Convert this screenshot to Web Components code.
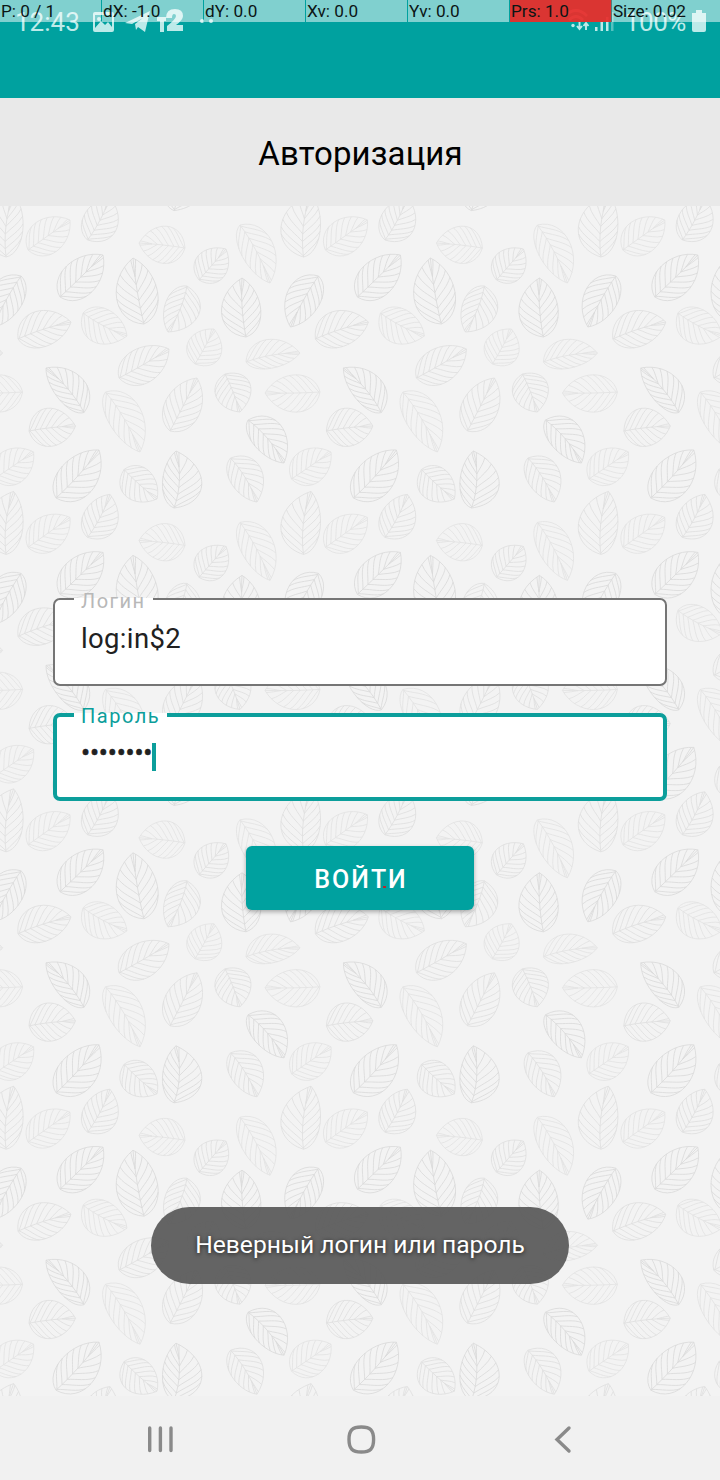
<!DOCTYPE html>
<html lang="ru">
<head>
<meta charset="utf-8">
<title>Авторизация</title>
<style>
html,body{margin:0;padding:0}
body{font-family:Roboto,"Noto Sans",sans-serif;background:#f3f3f3}
</style>
</head>
<body>
<login-screen></login-screen>
<script>
const define=(name,html,setup)=>customElements.define(name,class extends HTMLElement{
  connectedCallback(){
    if(this.shadowRoot)return;
    const t=document.createElement('template');
    t.innerHTML=html;
    this.attachShadow({mode:'open'}).append(t.content.cloneNode(true));
    if(setup)setup(this,this.shadowRoot);
  }
});

/* Leaf: stem x,y, tip x,y, bulge on each side of the midrib, tone */
const TILE=297.4;
const LEAVES=[
[28,250,70,220,17,17,1],[87.5,240,110,197,14,20,2],[60,297,103,255,17,18,3],[144,324,133,258,22,18,3],
[185,248,139,243,17,19,1],[199,280,226,249,16,16,2],[240,225,270,283,20,12,1],[303.5,257,311,194,25,13,2],
[246,337,242,278,22,16,3],[318.5,276,290.5,327,14,19,3],[187,286,168,332,21,13,2],[18,339,71,322,20,15,2],
[83,313,127,336,14,20,1],[195,364,214,329,16,18,1],[246,362,300,353,18,10,1],[119,378,169,349,16,18,2],
[84,412.5,46,368,10,20,3],[105.5,392,140,452,21,12,1],[170,431,197,378,17,18,2],[225,374,240,412,19,16,2],
[320,392,265,393,19,17,1],[29,431,75.5,426,20,17,2],[248,420,284,463,21,11,3],[56,498,99,450,16,21,3],
[124,469.5,157,499,15,18,2],[174,508,176,451,12,26,3],[230.5,458,257,502,20,12,2],[291.5,479,331,452,17,17,1]];
function leafPath([sx,sy,tx,ty,wl,wr]){
  const dx=tx-sx,dy=ty-sy,len=Math.hypot(dx,dy),nx=dy/len,ny=-dx/len;
  const at=(a,o)=>[sx+dx*a+nx*o,sy+dy*a+ny*o];
  const f=p=>p[0].toFixed(1)+' '+p[1].toFixed(1);
  const bez=(p,t)=>{const u=1-t;return [0,1].map(i=>u*u*u*p[0][i]+3*u*u*t*p[1][i]+3*u*t*t*p[2][i]+t*t*t*p[3][i])};
  const side=w=>[at(0,0),at(.1,w*1.4),at(.74,w*1.36),at(1,0)];
  const m=(wl-wr)*.42,rib=[at(0,0),at(.3,m),at(.7,m),at(1,0)];
  let d=`M${f(rib[0])}C${f(rib[1])} ${f(rib[2])} ${f(rib[3])}`;
  for(const w of [wl,-wr]){
    const s=side(w);
    d+=`M${f(s[0])}C${f(s[1])} ${f(s[2])} ${f(s[3])}`;
    for(let k=0;k<7;k++){
      const a=.02+k*.115,b=.4+.57*(k/6);
      const p=bez(rib,a),q=bez(s,b);
      const ex=q[0]-p[0],ey=q[1]-p[1];
      const along=(ex*dx+ey*dy)/len,out=ex*nx+ey*ny;
      const pt=(u,v)=>[p[0]+dx/len*along*u+nx*out*v,p[1]+dy/len*along*u+ny*out*v];
      d+=`M${f(p)}C${f(pt(.32,.32))} ${f(pt(.6,.8))} ${f(q)}`;
    }
  }
  return d;
}
define('leaf-backdrop',`<style>:host{display:block;overflow:hidden}svg{display:block;width:100%;height:100%}</style><svg></svg>`,(el,root)=>{
  const tone=['','#e3e3e3','#dfdfdf','#dadada'];
  let g='<defs><g id="tile" fill="none" stroke-width=".85">';
  for(const l of LEAVES)g+=`<path d="${leafPath(l)}" stroke="${tone[l[6]]}"/>`;
  g+='</g></defs>';
  for(let y=-1;y<5;y++)for(let x=-1;x<3;x++)g+=`<use href="#tile" x="${x*TILE}" y="${y*TILE-206}"/>`;
  root.querySelector('svg').innerHTML=g;
});

define('pointer-readout',`<style>
:host{display:grid;grid-template-columns:101px 101px 101px 101px 101px 101px 1fr;column-gap:1px;height:22px;color:#0b1515;font-size:17.2px;line-height:22px}
span{background:rgba(255,255,255,.5);padding-left:1px;white-space:pre;overflow:hidden}
.hot{background:rgba(232,46,44,.94);box-shadow:1px 0 #4f7f7e}
.hot+span{letter-spacing:-.1px}
</style><span>P: 0 / 1</span><span>dX: -1.0</span><span>dY: 0.0</span><span>Xv: 0.0</span><span>Yv: 0.0</span><span class="hot">Prs: 1.0</span><span>Size: 0.02</span>`);

define('status-bar',`<style>
:host{display:block;position:relative;height:98px;background:#00a19f;color:#bdeae9}
.row{display:flex;height:44px;padding:0 13px 0 15px;justify-content:space-between;font-size:26px;line-height:44px}
.side{display:flex}
svg{display:block;height:44px}
.pct{letter-spacing:-.4px;margin-left:3px}
pointer-readout{position:absolute;left:0;top:0;right:0}
</style>
<div class="row"><div class="side"><span class="clock">12:43</span>
<svg width="140" viewBox="80 0 140 44" fill="#bdeae9"><path fill-rule="evenodd" d="M95 12h17q2 0 2 2v16q0 2-2 2H95q-2 0-2-2V14q0-2 2-2zm0 3v13l6-7 4 4 3-3 4 5V15zm4 2a2 2 0 1 1 0 4 2 2 0 0 1 0-4z"/><path d="M125 23 150 11l-5 21-7-5-2 3-1-6 8-6-11 6z"/><path d="M157 17h9v4h-2v11h-4V21h-3zM166 18q0-9 9-9 8 0 8 7 0 4-7 9h7v6h-16v-5q9-7 9-10 0-2-2-2t-2 4z"/><circle cx="202" cy="21" r="2"/><circle cx="211" cy="21" r="2"/></svg></div>
<div class="side"><svg width="58" viewBox="565 0 58 44"><g fill="none" stroke="#bdeae9" stroke-width="2.6"><path d="M566 16q11-11 22 0M570 20q7-7 14 0"/></g><circle cx="574" cy="25.500" r="1.700" fill="#bdeae9"/><path d="M578 26l2.500 3 2.500-3M580.500 22v7M584.500 26l2.500-3 2.500 3M587 23v7" fill="none" stroke="#bdeae9" stroke-width="1.900"/><g fill="#bdeae9"><path d="M596 27h2.500v4H596zM601.500 22h2.500v9h-2.500zM607 17h2.500v14H607z"/><path opacity=".45" d="M612 12h2.500v19H612z"/></g></svg><span class="pct">100%</span><svg width="21" viewBox="686 0 21 44" fill="#bdeae9"><path d="M696 10h6v3h4v17q0 2-2 2h-10q-2 0-2-2V13h4z"/></svg></div></div>
<pointer-readout></pointer-readout>`);

define('title-bar',`<style>:host{display:flex;height:108px;align-items:center;justify-content:center;background:#e9e9e9;color:#000;font-size:33px;letter-spacing:.1px;padding:3px 0 0 1px;box-sizing:border-box}</style><slot></slot>`);

define('text-field',`<style>
:host{display:block;--c:#757575;--b:2px}
:host([focused]){--c:#0c9e9b;--b:4px}
fieldset{box-sizing:border-box;height:88px;margin:0;padding:0;border:0;position:relative}
.box{height:88px;box-sizing:border-box;border:var(--b) solid var(--c);border-radius:7px;background:#fff;padding:0 calc(28px - var(--b));display:flex}
.label{position:absolute;left:21px;top:-8px;padding:0 7px;height:22px;font-size:20px;line-height:22px;letter-spacing:1.5px;color:#b8b8b8;background:linear-gradient(#f3f3f300 8px,#fff 8px)}
:host([focused]) .label{color:#0c9e9b}
.value{font-size:27.5px;line-height:32px;letter-spacing:.35px;color:#212121;margin-top:calc(25px - var(--b));white-space:pre}
.caret{display:none;width:4px;height:28px;background:#0c9e9b;margin-top:26px}
:host([focused]) .caret{display:block}
:host([focused]) .value{font-size:27px;margin-top:20px;letter-spacing:-.2px;-webkit-text-stroke:.5px #212121}
</style><fieldset><div class="box"><span class="value"><slot></slot></span><i class="caret"></i></div><span class="label"></span></fieldset>`,(el,root)=>{root.querySelector('.label').textContent=el.getAttribute('label')});

define('action-button',`<style>
:host{display:flex;position:relative;width:228px;height:64px;box-sizing:border-box;padding:2px 0 0 2px;border-radius:6px;background:#00a19f;color:#fff;align-items:center;justify-content:center;font-size:25px;font-weight:500;letter-spacing:2px;box-shadow:0 2px 4px rgba(0,0,0,.3)}
i{position:absolute;left:137px;top:40px;width:3px;height:2px;background:#b52a2c}
</style><slot></slot><i></i>`);

define('toast-message',`<style>:host{display:flex;width:418px;height:77px;box-sizing:border-box;border-radius:39px;background:rgba(88,88,88,.92);color:#fff;align-items:center;justify-content:center;font-size:24.6px;padding-bottom:2px;text-shadow:0 1px 4px rgba(0,0,0,.7)}</style><slot></slot>`);

define('nav-bar',`<style>:host{display:flex;height:84px;background:#f1f1f1;justify-content:space-between;align-items:center;padding:4px 142px 0 142px;box-sizing:border-box}svg{display:block;fill:none;stroke:#8a8a8a;stroke-width:3.4;stroke-linecap:round}</style>
<svg width="36" height="36"><path d="M7.700 6v22.500M18.400 6v22.500M29 6v22.500"/></svg>
<svg width="36" height="36"><path d="M19.300 5C28.300 5 31.600 8.300 31.600 17.500S28.300 30 19.300 30 7 26.700 7 17.500 10.300 5 19.300 5z"/></svg>
<svg width="36" height="36"><path d="M27 6 15 17.500 27 29"/></svg>`);

define('login-screen',`<style>
:host{display:flex;flex-direction:column;width:720px;height:1480px}
main{display:grid;flex:1;min-height:0}
leaf-backdrop,.content{grid-area:1/1;min-height:0}
.content{display:flex;flex-direction:column;align-items:center;padding-top:392px;z-index:1}
text-field{width:614px}
text-field+text-field{margin-top:27px}
action-button{margin-top:45px}
toast-message{margin-top:297px}
</style>
<status-bar></status-bar>
<title-bar>Авторизация</title-bar>
<main><leaf-backdrop></leaf-backdrop>
<div class="content"><text-field label="Логин">log:in$2</text-field><text-field label="Пароль" focused>••••••••</text-field><action-button>ВОЙТИ</action-button><toast-message>Неверный логин или пароль</toast-message></div></main>
<nav-bar></nav-bar>`);
</script>
</body>
</html>
